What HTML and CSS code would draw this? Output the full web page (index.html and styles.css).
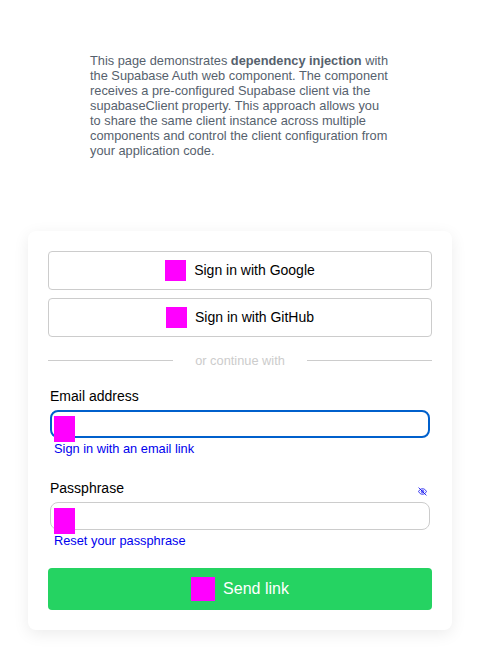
FILE: index.html
```html
<!DOCTYPE html>
<html lang="en">
<head>
<meta charset="utf-8">
<title>Supabase Auth</title>
<link rel="stylesheet" href="styles.css">
</head>
<body>
<p class="intro">This page demonstrates <strong>dependency injection</strong> with the Supabase Auth web component. The component receives a pre-configured Supabase client via the supabaseClient property. This approach allows you to share the same client instance across multiple components and control the client configuration from your application code.</p>
<main class="card">
  <div class="providers">
    <button class="provider" type="button"><span class="icon"></span><span class="provider-name">Sign in with Google</span></button>
    <button class="provider" type="button"><span class="icon"></span><span class="provider-name">Sign in with GitHub</span></button>
  </div>
  <div class="divider"><span class="divider-text">or continue with</span></div>
  <form>
    <div class="field">
      <div class="label-row"><label for="email">Email address</label></div>
      <div class="control">
        <input class="input input-active" id="email" type="email">
        <span class="field-icon"></span>
      </div>
      <a class="link" href="#">Sign in with an email link</a>
    </div>
    <div class="field">
      <div class="label-row">
        <label for="passphrase">Passphrase</label>
        <svg class="eye" viewBox="0 0 16 16" fill="none" stroke="currentColor" stroke-width="1.4">
          <path d="M1 8c3-6.5 11-6.5 14 0c-3 6.5-11 6.5-14 0z"/>
          <circle cx="8" cy="8" r="2.2"/>
          <path d="M1 1l14 14"/>
        </svg>
      </div>
      <div class="control">
        <input class="input" id="passphrase" type="password">
        <span class="field-icon"></span>
      </div>
      <a class="link" href="#">Reset your passphrase</a>
    </div>
    <button class="submit" type="button"><span class="icon icon-large"></span><span>Send link</span></button>
  </form>
</main>
</body>
</html>
```
FILE: styles.css
```css
* {
  box-sizing: border-box;
}

body {
  min-height: 100vh;
  margin: 0;
  padding: 53px 28px 40px;
  background: #fff;
  color: #000;
  font-family: "Liberation Sans", Arial, sans-serif;
}

.intro {
  width: 300px;
  height: 105px;
  margin: 0 auto 73px;
  color: #56616d;
  font-size: 12.8px;
  line-height: 15px;
}

.card {
  height: 399px;
  padding: 20px;
  border-radius: 8px;
  background: #fff;
  box-shadow: 0 4px 16px rgba(0, 0, 0, 0.08);
}

.providers {
  display: grid;
  gap: 8px;
}

.provider,
.submit {
  display: flex;
  align-items: center;
  justify-content: center;
  gap: 8px;
  width: 100%;
  padding: 0;
  border-radius: 4px;
  font-family: inherit;
}

.provider {
  height: 39px;
  border: 1px solid #ccc;
  background: #fff;
  color: #000;
  font-size: 14px;
}

.provider-name {
  padding-bottom: 2px;
}

.icon {
  width: 21px;
  height: 21px;
  background: #f0f;
}

.divider {
  display: flex;
  align-items: center;
  gap: 22px;
  height: 15px;
  margin: 16px 0 11px;
  color: #ccc;
  font-size: 12.8px;
}

.divider::before,
.divider::after {
  content: "";
  flex: 1;
  height: 1px;
  background: #ccc;
}

.field {
  height: 92px;
  padding: 0 2px;
}

.label-row {
  display: flex;
  justify-content: space-between;
  height: 31px;
  padding-top: 9px;
  font-size: 14px;
  line-height: 16px;
}

.eye {
  width: 9px;
  height: 9px;
  margin: 6.5px 3.5px 0 0;
  color: #00e;
}

.control {
  position: relative;
  height: 28px;
}

.input {
  display: block;
  width: 100%;
  height: 28px;
  padding: 0 28px;
  border: 1px solid #ccc;
  border-radius: 8px;
  outline: none;
  background: #fff;
}

.input-active {
  border: 2px solid #0060cc;
}

.field-icon {
  position: absolute;
  top: 6px;
  left: 4px;
  width: 21px;
  height: 26px;
  background: #f0f;
}

.link {
  display: block;
  width: fit-content;
  margin: 3px 0 0 4px;
  color: #00e;
  font-size: 12.8px;
  line-height: 15px;
  text-decoration: none;
}

.submit {
  height: 42px;
  margin-top: 5px;
  border: 0;
  background: #25d362;
  color: #fff;
  font-size: 16px;
}

.icon-large {
  width: 24px;
  height: 24px;
}
```
